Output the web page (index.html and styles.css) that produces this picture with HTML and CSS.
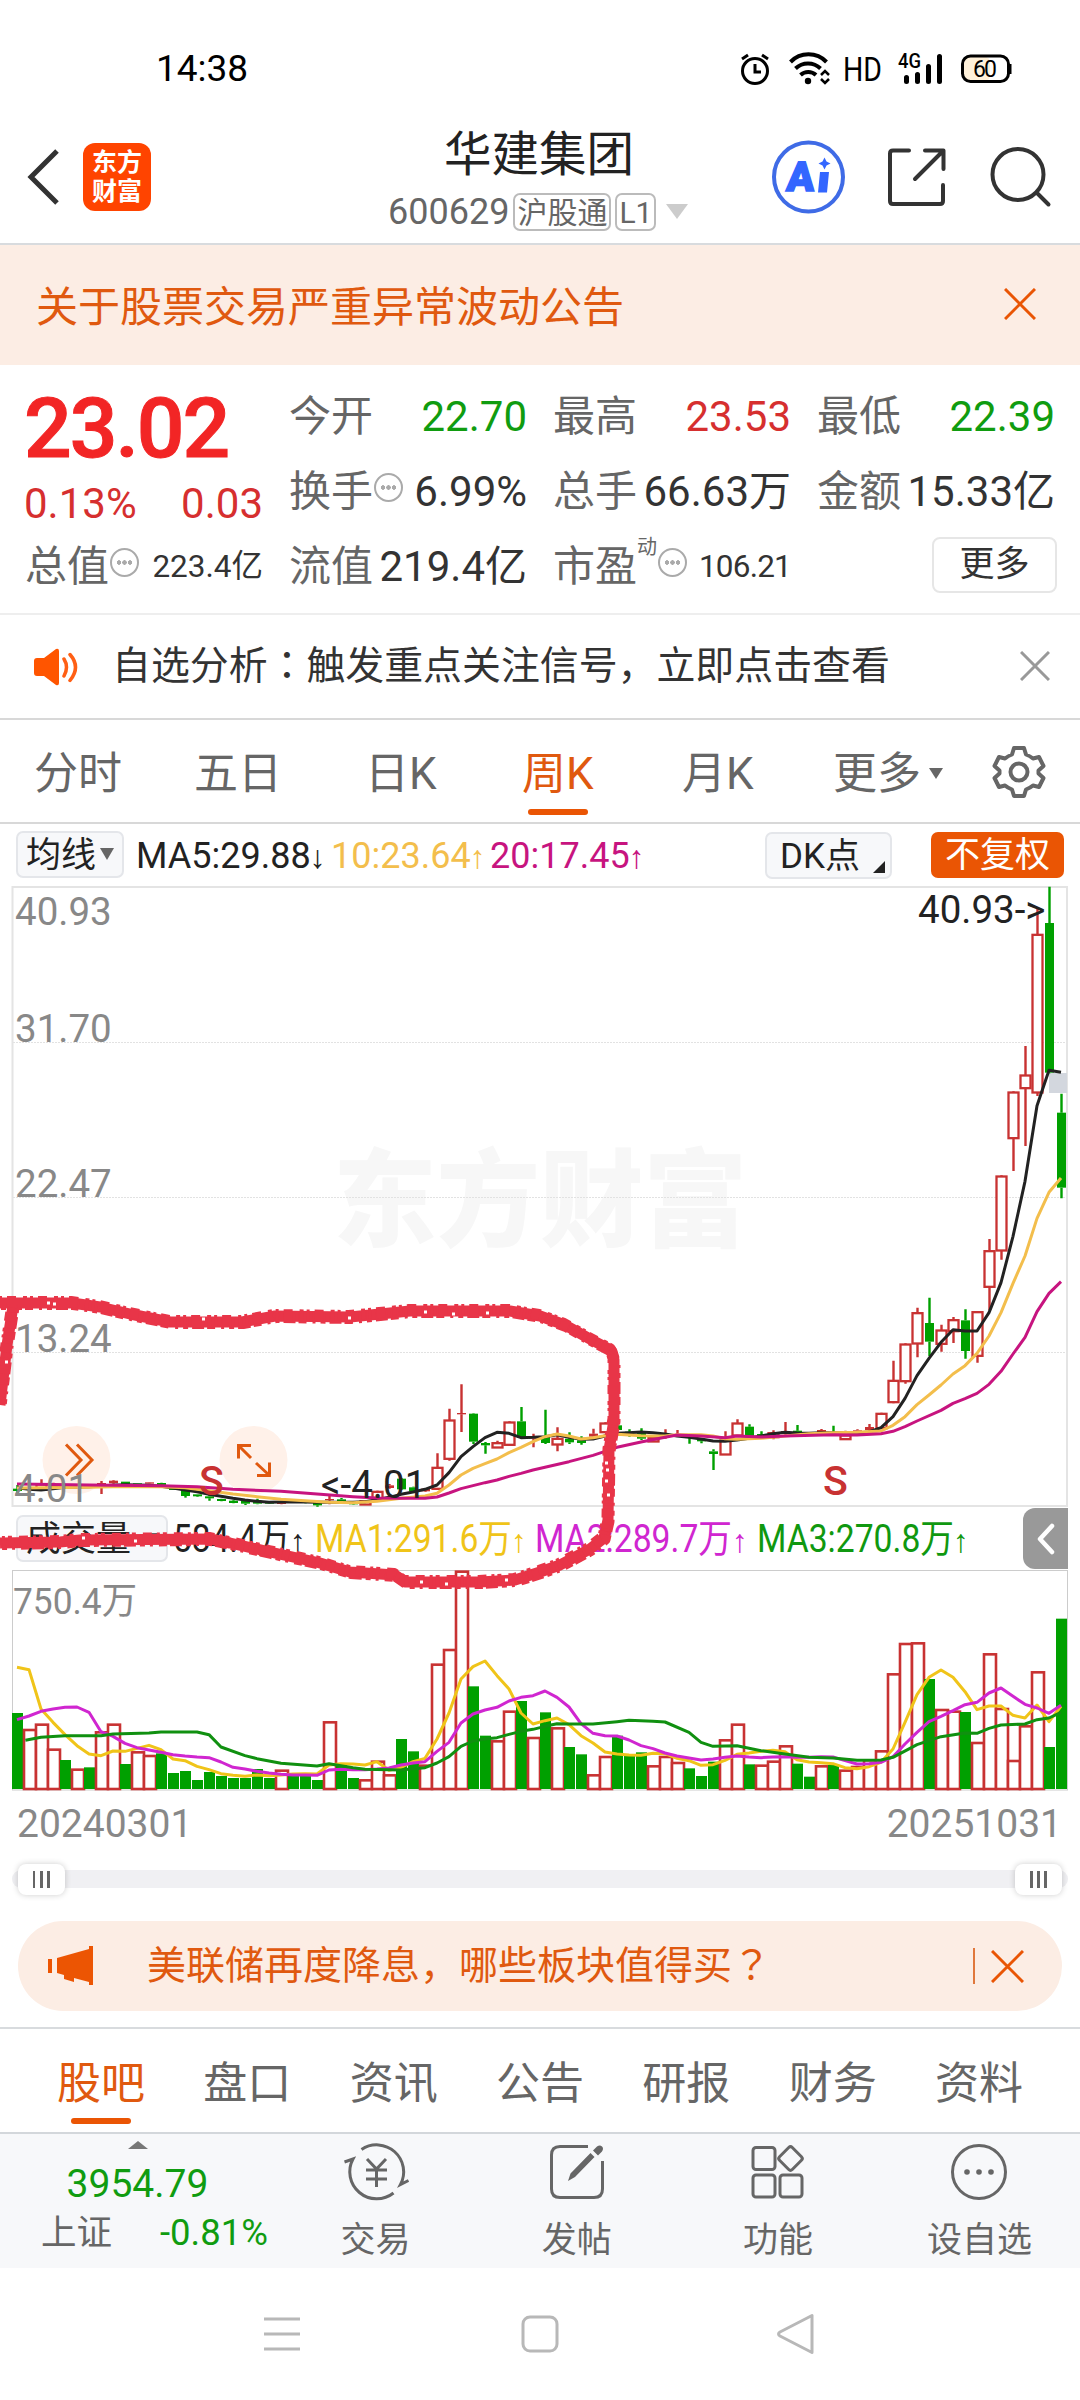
FILE: index.html
```html
<!DOCTYPE html>
<html lang="zh-CN">
<head>
  <meta charset="UTF-8">
  <title>华建集团 600629</title>
  <link rel="stylesheet" href="styles.css">
</head>
<body>
<div class="statusbar">
  <span class="time">14:38</span>
  <svg class="status-icons" width="280" height="40" viewBox="735 50 280 40">
    <g fill="none" stroke="#000" stroke-width="3">
      <circle cx="755" cy="71" r="12.5"/>
      <path d="M755 64v8h6M742 59l6-4M768 59l-6-4"/>
    </g>
    <g fill="none" stroke="#000" stroke-width="4">
      <path d="M790.500 62a25 25 0 0 1 36 0M795.500 68.500a18 18 0 0 1 25 0M800.500 75a11.500 11.500 0 0 1 15.500 0"/>
      <path stroke-width="2.500" d="M821 75l4-4 4 4M821 79l4 4 4-4"/>
    </g>
    <circle cx="808" cy="81" r="3.200"/>
    <text x="843" y="81" font-size="34" textLength="39" lengthAdjust="spacingAndGlyphs">HD</text>
    <text x="898" y="68" font-size="20" font-weight="500" textLength="23" lengthAdjust="spacingAndGlyphs">4G</text>
    <path stroke="#000" stroke-width="5" stroke-linecap="round" d="M906.500 77.500v4M917.500 74.500v7M928.500 66.500v15M939.500 56.500v25"/>
    <rect x="963" y="56.500" width="27" height="25" rx="6" fill="#fff1da"/>
    <rect x="962.500" y="56" width="46" height="25.500" rx="8" fill="none" stroke="#000" stroke-width="3"/>
    <path stroke="#000" stroke-width="3" d="M1010 64v10"/>
    <text x="973" y="77" font-size="23" textLength="24">60</text>
  </svg>
</div>

<header class="header">
  <svg class="back" width="34" height="58" viewBox="0 0 34 58"><path d="M31 3L5 29L31 55" fill="none" stroke="#333" stroke-width="5"/></svg>
  <div class="logo">东方<br>财富</div>
  <div class="title">
    <h1>华建集团</h1>
    <div class="code">600629<span class="tag">沪股通</span><span class="tag">L1</span><i class="tri"></i></div>
  </div>
  <svg class="head-icons" width="290" height="80" viewBox="765 137 290 80">
    <circle cx="808.500" cy="177" r="34.500" fill="none" stroke="#3f6be6" stroke-width="4"/>
    <text x="786" y="191" font-size="41" font-weight="900" fill="#3366ff" stroke="#3366ff" stroke-width="1.500" textLength="27" transform="skewX(-4) translate(13 0)">A</text>
    <path d="M820 172h9l-2 20.500h-9zM824.500 157.500l2 4 4 2-4 2-2 4-2-4-4-2 4-2z" fill="#3366ff"/>
    <g fill="none" stroke="#333" stroke-width="4" stroke-linecap="round" stroke-linejoin="round">
      <path d="M909 150.500H893q-3 0-3 3V201q0 3 3 3h47q3 0 3-3V185M925 150.500h18.500V169M943 151L915 179"/>
      <circle cx="1018" cy="174.500" r="25.500"/>
      <path d="M1037 193l11.500 11.500"/>
    </g>
  </svg>
</header>

<div class="notice">
  <span>关于股票交易严重异常波动公告</span>
  <svg width="32" height="32" viewBox="0 0 32 32"><path d="M1 1l30 30M31 1L1 31" stroke="#e95504" stroke-width="3"/></svg>
</div>

<section class="quote">
  <div class="price">
    <div class="now">23.02</div>
    <div class="change"><span>0.13%</span><span>0.03</span></div>
  </div>
  <div class="cell"><label>今开</label><b class="green">22.70</b></div>
  <div class="cell"><label>最高</label><b class="red">23.53</b></div>
  <div class="cell"><label>最低</label><b class="green">22.39</b></div>
  <div class="cell"><label>换手</label><i class="more-dot"></i><b>6.99%</b></div>
  <div class="cell"><label>总手</label><b>66.63万</b></div>
  <div class="cell"><label>金额</label><b>15.33亿</b></div>
  <div class="cell"><label>总值</label><i class="more-dot"></i><b class="small">223.4亿</b></div>
  <div class="cell"><label>流值</label><b>219.4亿</b></div>
  <div class="cell"><label>市盈</label><sup>动</sup><i class="more-dot"></i><b class="small tight">106.21</b></div>
  <div class="cell"><button class="btn-more">更多</button></div>
</section>

<div class="signal">
  <svg width="46" height="38" viewBox="33 647 46 38">
    <path d="M34 660q0-3 3-3h7l12-9q3-1 3 2v32q0 3-3 2l-12-9h-7q-3 0-3-3z" fill="#ff5500"/>
    <path d="M64 658q5 8 0 17M70 653.500q11 12.500 0 26" fill="none" stroke="#ff5f14" stroke-width="3.500" stroke-linecap="round"/>
  </svg>
  <span>自选分析<em lang="zh-TW">：</em>触发重点关注信号，立即点击查看</span>
  <svg width="30" height="30" viewBox="0 0 30 30"><path d="M1 1l28 28M29 1L1 29" stroke="#999" stroke-width="3"/></svg>
</div>

<nav class="periods">
  <a>分时</a><a>五日</a><a>日K</a><a class="active">周K</a><a>月K</a><a>更多<i></i></a>
  <svg width="54" height="54" viewBox="-27 -27 54 54" fill="none" stroke="#666" stroke-width="4" stroke-linejoin="round">
    <path d="M-5-24H5L7-17.500Q11-16 14-13.500L20-15L24.500-6L19.500-1.500V1.500L24.500 6L20 15L14 13.500Q11 16 7 17.500L5 24H-5L-7 17.500Q-11 16-14 13.500L-20 15L-24.500 6L-19.500 1.500V-1.500L-24.500-6L-20-15L-14-13.500Q-11-16-7-17.500Z"/>
    <circle r="8.500"/>
  </svg>
</nav>

<div class="chart">
  <div class="ma-row">
    <span class="pill">均线<i></i></span>
    <span class="ma5">MA5:29.88<em>↓</em></span>
    <span class="ma10">10:23.64<em>↑</em></span>
    <span class="ma20">20:17.45<em>↑</em></span>
    <span class="pill dk">DK点</span>
    <span class="fq">不复权</span>
  </div>

  <svg class="kline" width="1080" height="628" viewBox="0 882 1080 628">
    <text class="watermark" x="333" y="1238" textLength="414" lengthAdjust="spacingAndGlyphs">东方财富</text>
    <path d="M13 1042.500H1066M13 1197.500H1066M13 1352.500H1066" stroke="#e2e2e2" stroke-dasharray="2 1"/>
    <rect x="12.500" y="887" width="1054.500" height="619" fill="none" stroke="#e4e4e4" stroke-width="2"/>
    <circle class="float" cx="76.500" cy="1460" r="34"/>
    <circle class="float" cx="253.500" cy="1460" r="34"/>
    <g fill="none" stroke="#e0590f" stroke-width="3">
      <path d="M66 1452l15 15.500-15 15.500M77 1452l15 15.500-15 15.500" transform="translate(0 -7.500)"/>
      <path d="M251 1445.500h-12.500v13M239 1446l12 12M257 1475.500h12.500v-13M269 1475l-13-12"/>
    </g>
    <rect x="1049" y="1073" width="18" height="20" fill="#d3d7de"/>
    <g id="candles"></g>
    <g id="price-lines"></g>
    <g class="axis">
      <text x="15" y="925">40.93</text>
      <text x="15" y="1042">31.70</text>
      <text x="15" y="1197">22.47</text>
      <text x="15" y="1352">13.24</text>
      <text x="14" y="1502">4.01</text>
    </g>
    <text class="mark" x="321" y="1498">&lt;-4.01</text>
    <text class="mark" x="918" y="923">40.93-&gt;</text>
    <text class="sell" x="199" y="1495">S</text>
    <text class="sell" x="823" y="1495">S</text>
  </svg>

  <div class="vol-row">
    <span class="pill">成交量<i></i></span>
    <svg width="820" height="58" viewBox="170 1510 820 58">
      <g font-size="39">
        <text x="173" y="1552" textLength="117" lengthAdjust="spacingAndGlyphs" fill="#222">584.4万</text>
        <text x="315" y="1552" textLength="197" lengthAdjust="spacingAndGlyphs" fill="#f0c419">MA1:291.6万</text>
        <text x="535" y="1552" textLength="197" lengthAdjust="spacingAndGlyphs" fill="#d026d0">MA2:289.7万</text>
        <text x="757" y="1552" textLength="197" lengthAdjust="spacingAndGlyphs" fill="#109810">MA3:270.8万</text>
      </g>
      <g class="arrows">
        <text x="290" y="1552" fill="#222">↑</text>
        <text x="511" y="1552" fill="#f0c419">↑</text>
        <text x="732" y="1552" fill="#d026d0">↑</text>
        <text x="953" y="1552" fill="#109810">↑</text>
      </g>
    </svg>
    <span class="fold"><svg width="20" height="32" viewBox="0 0 20 32"><path d="M16 3L4 16l12 13" fill="none" stroke="#fff" stroke-width="4.500" stroke-linecap="round" stroke-linejoin="round"/></svg></span>
  </div>

  <svg class="volume" width="1080" height="224" viewBox="0 1568 1080 224">
    <rect x="12.500" y="1570.500" width="1055" height="219.500" fill="none" stroke="#ccc"/>
    <text class="axis" x="13" y="1614" textLength="124" lengthAdjust="spacingAndGlyphs">750.4万</text>
    <g id="bars"></g>
    <g id="vol-lines"></g>
  </svg>

  <div class="dates"><span>20240301</span><span>20251031</span></div>
  <div class="slider"><i></i><i></i></div>

  <!-- hand-drawn circle over the flat part of the chart -->
  <svg class="scribble" width="640" height="330" viewBox="0 1280 640 330">
    <g fill="none" stroke="#e83548">
      <path id="pen" stroke-linejoin="round" d="M0 1303H72L100 1307L130 1314L170 1322H242L275 1316L350 1317L410 1311H510L540 1316L565 1325L590 1339L611 1350L614 1360V1420L609 1450L608 1520L604 1538L590 1549L560 1565L540 1572L515 1580L480 1582H405L395 1575L350 1572L320 1563L270 1552L230 1543L210 1539L80 1540L60 1542L0 1543M13 1306L7 1345L0 1405"/>
      <use href="#pen" class="rough"/>
      <use href="#pen" class="rough two"/>
    </g>
    <path d="M47 1303h3M53 1304h3M202 1319h3M348 1318h3M424 1312h3M452 1314h3M486 1313h3M605 1463h3M606 1470h3M605 1481h3M607 1495h3M82 1538h3M134 1541h3M420 1582h3M445 1584h3M505 1580h3M5 1362h3" stroke="#fff" stroke-width="3"/>
  </svg>
</div>

<div class="banner">
  <svg width="46" height="42" viewBox="47 1945 46 42" fill="#ec5503">
    <path d="M48 1959h4v14h-4zM57 1958l32-9v-3h4v39h-4v-3l-15-4v4l-10-3v-4l-7-2z"/>
  </svg>
  <span>美联储再度降息，哪些板块值得买<em lang="zh-TW">？</em></span>
  <i></i>
  <svg width="33" height="33" viewBox="0 0 33 33"><path d="M1 1l31 31M32 1L1 32" stroke="#e95504" stroke-width="3"/></svg>
</div>

<nav class="sections">
  <a class="active">股吧</a><a>盘口</a><a>资讯</a><a>公告</a><a>研报</a><a>财务</a><a>资料</a>
</nav>

<footer class="toolbar">
  <div class="index">
    <i></i>
    <div class="value">3954.79</div>
    <div class="row"><span>上证</span><span class="green">-0.81%</span></div>
  </div>
  <div class="tool">
    <svg width="68" height="60" viewBox="341 2142 68 60" fill="none" stroke="#666" stroke-width="3">
      <path d="M360.500 2149.500A27 27 0 0 1 399.500 2184.500l8-4M392.500 2193A27 27 0 0 1 352 2159l-8.500 3"/>
      <path d="M366 2159l9.500 10 9.500-10M365 2170h21M365 2179h21M375.500 2169v18"/>
    </svg>
    交易
  </div>
  <div class="tool">
    <svg width="60" height="60" viewBox="547 2142 60 60" fill="none" stroke="#666" stroke-width="3">
      <path d="M588 2146.500H560q-8.500 0-8.500 8.500V2189q0 8.500 8.500 8.500H594q8.500 0 8.500-8.500V2161"/>
      <path d="M568 2181l2.500-7.500L590.500 2153l4 4L575 2177zM593 2150.500l4-4q3-2 5 0t0 5l-4 4z" fill="#666" stroke="none"/>
    </svg>
    发帖
  </div>
  <div class="tool">
    <svg width="60" height="60" viewBox="749 2142 60 60" fill="none" stroke="#666" stroke-width="3">
      <rect x="754" y="2147.500" width="22" height="22" rx="3"/><rect x="754" y="2175" width="22" height="22" rx="3"/>
      <rect x="781" y="2175" width="22" height="22" rx="3"/><rect x="782.500" y="2149.500" width="18" height="18" rx="2.500" transform="rotate(45 791.500 2158.500)"/>
    </svg>
    功能
  </div>
  <div class="tool">
    <svg width="60" height="60" viewBox="-30 -30 60 60"><circle r="26.500" fill="none" stroke="#666" stroke-width="3"/><g fill="#666"><circle cx="-12" r="2.800"/><circle r="2.800"/><circle cx="12" r="2.800"/></g></svg>
    设自选
  </div>
</footer>

<div class="sysnav">
  <svg width="40" height="42" viewBox="0 0 40 42"><path d="M0 6h36M0 21h36M0 36h36" stroke="#b8b8b8" stroke-width="3"/></svg>
  <svg width="38" height="42" viewBox="0 0 38 42"><rect x="2" y="4" width="34" height="34" rx="7" fill="none" stroke="#b8b8b8" stroke-width="3"/></svg>
  <svg width="40" height="44" viewBox="0 0 40 44"><path d="M36 3.500V40.500L4 24q-3-2 0-4z" fill="none" stroke="#b8b8b8" stroke-width="3" stroke-linejoin="round"/></svg>
</div>
<script src="chart.js"></script>
</body>
</html>
```
FILE: styles.css
```css
body { margin: 0; width: 1080px; height: 2400px; background: #fff; color: #333; font-family: Roboto, "Noto Sans CJK SC", sans-serif; overflow: hidden; }
* { box-sizing: border-box; }
svg { display: block; flex: none; }
svg text { font-family: Roboto, "Noto Sans CJK SC", sans-serif; }
i, em { font-style: normal; }
b { font-weight: 400; }
[lang="zh-TW"] { font-family: "Noto Sans CJK TC", sans-serif; line-height: 1; }
.green { color: #109c10; }
.red { color: #d62f2f; }

.statusbar { height: 122px; display: flex; justify-content: space-between; padding: 50px 65px 0 156px; color: #000; }
.time { font-size: 37px; line-height: 38px; }

.header { height: 123px; display: flex; align-items: center; border-bottom: 2px solid #d8dbde; padding: 0 25px 0 26px; position: relative; }
.back { margin-top: -12px; }
.logo { width: 68px; height: 68px; margin: -12px 0 0 23px; background: #ff4400; border-radius: 12px; color: #fff; font-size: 25px; font-weight: 700; line-height: 29px; text-align: center; padding-top: 5px; }
.title { margin-left: 238px; width: 302px; }
h1 { margin: -9px 0 0 55px; font-size: 47.500px; font-weight: 400; line-height: 60px; color: #222; white-space: nowrap; }
.code { display: flex; align-items: center; font-size: 36px; line-height: 40px; color: #666; margin-top: 7px; white-space: nowrap; margin-left: -1px; }
.tag { font-size: 30px; line-height: 35px; height: 38px; border: 2px solid #bbb; border-radius: 7px; padding: 0 2px; margin-left: 4px; }
.tri { margin-left: 10px; border: 11px solid transparent; border-top: 15px solid #ccc; border-bottom: 0; }
.head-icons { margin: -12px 0 0 auto; }

.notice { height: 120px; background: #fcede4; color: #e0590f; display: flex; align-items: center; justify-content: space-between; padding: 0 44px 2px 36px; font-size: 42px; }
.notice span { margin-top: -2px; }

.quote { height: 250px; border-bottom: 2px solid #eee; padding: 14px 25px 0 25px; display: grid; grid-template-columns: 238px 238px 238px 238px; grid-template-rows: 75px 75px 75px; column-gap: 26px; }
.price { grid-row: span 2; color: #f22525; }
.now { font-size: 84px; font-weight: 500; line-height: 99px; letter-spacing: -2px; -webkit-text-stroke: 1px #f22525; margin-left: -1px; }
.change { display: flex; justify-content: space-between; font-size: 42px; line-height: 52px; color: #d62f2f; margin-left: -1px; }
.cell { display: flex; align-items: center; font-size: 42px; line-height: 75px; white-space: nowrap; }
.cell label { color: #666; }
.cell b { margin-left: auto; }
.cell b.green { color: #109c10; }
.cell .small { font-size: 31.500px; }
.cell .tight { letter-spacing: -0.8px; }
.cell sup { font-size: 20px; line-height: 20px; color: #666; margin: -40px 0 0 0; }
.more-dot { width: 29px; height: 29px; border: 2px solid #aaa; border-radius: 50%; margin: -8px 0 0 1px; background: radial-gradient(circle at 7px 12.500px, #aaa 2px, transparent 2.500px), radial-gradient(circle at 12.500px 12.500px, #aaa 2px, transparent 2.500px), radial-gradient(circle at 18px 12.500px, #aaa 2px, transparent 2.500px); }
.btn-more { margin: -4px -2px 0 auto; width: 125px; height: 56px; background: #fff; border: 2px solid #e6e6e6; border-radius: 8px; font: 35px/51px Roboto, "Noto Sans CJK SC", sans-serif; color: #333; padding: 0; }

.signal { height: 105px; border-bottom: 2px solid #d8d8d8; display: flex; align-items: center; padding: 0 30px 0 33px; font-size: 38.900px; }
.signal span { margin: 0 auto 0 33px; white-space: nowrap; line-height: 46px; padding-bottom: 1px; }
.signal svg:last-child { margin-top: -2px; }

.periods { height: 104px; border-bottom: 2px solid #d8d8d8; display: grid; grid-template-columns: 160px 171px 157px 160px 151px 159px 54px; align-items: center; padding: 0 34px; font-size: 44px; color: #666; }
.periods a { position: relative; line-height: 97px; padding-top: 6px; justify-self: start; white-space: nowrap; }
.periods a i { display: inline-block; vertical-align: 10px; margin-left: 8px; border: 7px solid transparent; border-top: 11px solid #666; border-bottom: 0; }
.active { color: #e0590f; }
.periods .active::after, .sections .active::after { content: ""; position: absolute; left: 50%; margin-left: -30px; bottom: 8px; width: 60px; height: 6px; border-radius: 3px; background: #ea5504; }

.chart { position: relative; height: 1097px; }
.ma-row { height: 58px; padding: 7px 16px 0; display: flex; align-items: flex-start; font-size: 36px; line-height: 50px; white-space: nowrap; }
.ma-row em, .arrows text { font-family: "Liberation Sans", sans-serif; }
.ma-row em { font-size: 32px; display: inline-block; width: 13px; margin-left: -1px; }
.arrows { font-size: 32px; }
.pill { height: 47px; border: 2px solid #e4e6ea; border-radius: 7px; background: #f7f8fa; font-size: 35px; line-height: 45px; color: #222; padding: 0 8px; white-space: nowrap; }
.pill i { display: inline-block; vertical-align: 7px; margin-left: 4px; border: 7px solid transparent; border-top: 12px solid #666; border-bottom: 0; }
.ma5 { color: #222; margin-left: 12px; width: 195px; }
.ma10 { color: #f3be4c; width: 159px; }
.ma20 { color: #c7147f; }
.dk { margin: 1px 0 0 auto; width: 127px; padding-left: 13px; position: relative; }
.dk::after { content: ""; position: absolute; right: 5px; bottom: 4px; border-left: 12px solid transparent; border-bottom: 12px solid #222; }
.fq { margin: 1px 0 0 39px; width: 133px; height: 46px; border-radius: 7px; background: #ea5504; color: #fff; font-size: 35px; line-height: 48px; text-align: center; }

.axis { font-size: 38.5px; fill: #888; }
text.axis { font-size: 37px; }
.watermark { font-size: 106px; font-weight: 900; fill: #f7f7f7; }
.float { fill: #fff1e9; }
.mark { font-size: 38.5px; fill: #222; }
.sell { font-size: 41px; font-weight: 500; fill: #c83232; }

.vol-row { height: 58px; display: flex; padding-left: 16px; }
.vol-row .pill { width: 152px; margin-top: 5px; flex: none; }
.vol-row .pill i { margin-left: 14px; vertical-align: 6px; }
.vol-row > svg { margin-left: 2px; }
.fold { margin: -2px 0 0 33px; width: 45px; height: 61px; background: #999; border-radius: 12px 0 0 12px; display: flex; align-items: center; justify-content: center; }

.dates { display: flex; justify-content: space-between; padding: 1px 18px 0 17px; font-size: 39px; line-height: 62px; color: #888; }
.slider { margin: 15px 12px 0; height: 18px; border-radius: 9px; background: #f0f0f3; display: flex; align-items: center; justify-content: space-between; padding: 0 6px; }
.slider i { width: 47px; height: 31px; border-radius: 8px; background: #fff; box-shadow: 0 0 6px #0003; display: flex; align-items: center; justify-content: center; }
.slider i::before { content: ""; width: 17px; height: 17px; background: repeating-linear-gradient(90deg, #666 0 2.500px, transparent 2.500px 7.200px); }
.scribble { position: absolute; left: 0; top: 456px; }
.scribble g { stroke-width: 11px; }
.scribble .rough { stroke-dasharray: 5 4 12 3 8 6 3 5; transform: translate(1px, 1.5px); }
.scribble .rough.two { stroke-dasharray: 3 5 9 7 4 3; transform: translate(-1px, -1.5px); }

.banner { margin: 0 18px; height: 90px; border-radius: 45px; background: #fcede4; color: #e0590f; display: flex; align-items: center; padding: 0 38px 0 29px; font-size: 39px; }
.banner span { margin: 0 auto 0 54px; line-height: 46px; padding-bottom: 1px; white-space: nowrap; }
.banner i { width: 2px; height: 36px; background: #e0783c; margin-right: 16px; }

.sections { margin-top: 16px; height: 107px; border-top: 2px solid #d8dbde; border-bottom: 2px solid #d3d7db; display: flex; justify-content: space-between; padding: 0 57px; font-size: 44px; line-height: 98px; color: #666; }
.sections a { position: relative; padding-top: 6px; }
.sections .active::after { bottom: 8px; }

.toolbar { height: 134px; background: #f7f8fa; display: flex; color: #666; }
.index { width: 275px; text-align: center; padding-top: 7px; margin-right: 0; }
.index i { display: block; width: 20px; margin: 0 0 0 128px; border: 10px solid transparent; border-bottom: 8px solid #777; border-top: 0; }
.value { font-size: 39px; line-height: 46px; color: #109c10; margin-top: 12px; }
.row { display: flex; justify-content: space-between; padding: 0 7px 0 41px; font-size: 35.500px; line-height: 52px; }
.row .green { font-size: 36.500px; }
.tool { width: 201.300px; text-align: center; font-size: 35px; line-height: 54px; padding-top: 8px; }
.tool svg { margin: 0 auto 12px; }

.sysnav { display: flex; justify-content: space-between; align-items: center; padding: 0 264px; height: 131px; }
```
FILE: chart.js
```js
const RED = '#c83232', GREEN = '#00a000';
const STEP = 12, X0 = 17;

// color, open/close range, high, low (3 units = 1px, measured from y 1260)
const candles = `g 686 693 675 700|r 683 690 683 697|r 672 688 658 690|r 676 684 668 686|r 678 682 674 684|r 676 680 674 682|r 675 679 672 682|r 669 673 663 702
r 662 670 660 672|g 665 672 665 673|g 670 675 670 675|r 667 671 666 672|g 669 682 668 684|g 684 690 684 690|g 690 708 690 713|g 703 709 703 711|g 709 715 703 722|g 717 723 716 724
g 722 729 720 730|g 722 731 722 735|g 722 731 716 733|g 725 731 724 732|r 723 732 722 733|r 724 728 724 728|g 725 729 725 730|g 729 736 728 740|r 717 721 707 733|g 718 723 714 726
g 729 733 728 734|r 722 732 721 733|r 694 714 692 714|r 676 684 672 686|g 656 688 654 690|g 682 694 680 694|r 686 694 684 696|r 622 685 580 690|r 480 595 446 602|r 459 463 373 516
g 461 545 460 552|g 549 556 546 581|r 548 561 542 563|r 486 553 484 556|g 484 533 441 536|r 530 536 521 562|g 530 549 449 552|r 535 552 502 574|g 536 547 517 552|g 541 549 529 554
r 521 530 506 532|r 489 515 487 518|g 496 510 494 512|g 515 528 508 530|g 518 536 505 540|r 533 543 530 544|r 524 532 508 536|r 522 528 510 530|g 527 533 526 551|g 538 544 536 550
g 574 582 568 630|r 540 582 514 584|r 489 525 478 528|g 500 528 493 530|g 522 530 514 532|r 518 530 511 538|r 513 518 486 524|g 512 520 495 522|g 517 522 516 523|r 510 516 507 518
g 517 524 497 526|r 525 536 512 539|r 511 518 508 520|r 501 510 492 512|r 460 503 458 506|r 361 425 302 430|r 252 362 250 371|r 158 249 143 292|g 189 245 113 288|r 210 250 194 275
r 179 212 171 249|g 181 273 148 296|r 155 286 153 308|r -28 79 -63 150|r -252 -30 -254 -1|r -504 -367 -506 -267|r -555 -517 -642 -342|r -977 -504 -1055 -492|g -1011 -562 -1120 -560|g -442 -217 -499 -185`
  .split(/[|\n]/).map(s => s.split(' '));

const volumes = ('g228 r180 r196 r121 g87 r61 g65 r173 r196 g75 r113 r102 g107 g48 g54 g27 g51 g39 g33 g33 g60 g33 r58 g39 g39 g27 r203 g72 g33 r29 r85 r44 ' +
  'g150 g113 r73 r376 r420 r655 g308 g160 r146 r235 g264 r156 g230 r185 g126 g104 r44 r99 g160 g99 g110 r71 r99 r81 g62 g39 g82 r149 r196 g74 r73 r85 r131 ' +
  'g76 g37 r71 g72 r58 r69 r89 r116 r347 r438 r440 g330 r240 r235 g231 r141 r407 r243 r87 r191 r353 g126 g511').split(' ');

// "index:value" pairs, missing indexes are joined straight
const priceLines = [
  ['#222', '0:683 1:688 2:690 3:686 4:682 6:680 8:676 9:674 11:676 12:679 13:684 14:690 15:695 16:703 17:709 18:715 19:720 20:724 21:727 23:725 25:727 28:727 29:725 30:719 31:712 32:703 33:696 34:688 35:675 36:638 37:590 38:560 39:533 40:517 41:520 42:533 43:532 44:530 45:524 46:532 47:538 48:537 49:528 50:520 51:518 52:516 53:518 54:522 55:528 56:532 57:537 58:543 59:544 60:540 61:535 62:528 63:521 64:517 65:519 66:520 67:518 70:519 71:516 72:503 73:470 74:415 75:347 76:295 77:247 78:209 79:213 80:213 81:158 82:68 83:-71 84:-236 85:-463 86:-569 87:-563'],
  ['#f3be4c', '0:684 6:682 8:680 12:680 14:683 16:692 18:702 20:710 22:718 24:722 26:727 28:728 30:724 32:715 34:708 35:700 36:675 37:645 38:625 39:611 40:597 41:578 42:562 43:545 44:530 45:522 46:528 47:537 48:533 49:527 50:523 52:527 54:528 55:524 57:524 58:528 59:536 60:538 62:535 64:528 66:521 68:518 70:517 72:513 73:496 74:470 75:434 76:405 77:375 78:342 79:317 80:280 81:228 82:158 83:70 84:-12 85:-125 86:-203 87:-246'],
  ['#c7147f', '0:672 6:675 12:677 15:680 18:688 22:694 25:702 28:710 30:714 32:715 34:715 35:711 36:699 37:686 39:668 40:660 41:649 42:640 43:630 44:622 46:605 48:586 50:562 52:546 54:532 55:525 57:528 59:533 60:528 62:531 64:528 68:524 70:525 72:521 73:514 74:500 75:483 77:451 78:430 79:416 80:400 81:373 82:334 83:282 84:232 85:155 86:100 87:65']
];
const volLines = [
  ['#f0c419', '0:365 1:358 2:240 3:200 4:163 5:130 6:105 7:100 8:114 9:113 10:122 11:131 12:118 13:90 14:85 15:68 16:58 17:46 18:41 19:38 20:42 21:40 22:42 23:45 24:46 25:45 26:72 27:76 28:75 29:72 30:82 31:56 32:65 33:82 34:92 35:150 36:228 37:330 38:367 39:384 40:340 41:300 42:228 43:195 44:205 45:213 46:193 47:160 48:138 49:111 50:105 51:102 52:101 53:107 54:106 55:92 56:85 57:71 58:73 59:86 60:104 61:108 62:113 63:116 64:112 65:88 66:81 67:79 68:76 69:64 70:61 71:67 72:80 73:120 74:200 75:283 76:335 77:357 78:335 79:292 80:238 81:249 82:249 83:221 84:213 85:252 86:202 87:248'],
  ['#d026d0', '0:208 1:219 2:233 3:240 4:245 5:246 6:230 7:172 8:158 9:137 10:124 11:117 12:110 13:103 14:99 15:96 16:94 17:81 18:65 19:60 20:53 21:48 22:44 23:42 24:42 25:41 26:57 27:59 28:58 29:58 30:60 31:63 32:72 33:78 34:82 35:113 36:140 37:198 38:225 39:237 40:245 41:264 42:275 43:280 44:294 45:275 46:246 47:196 48:167 49:160 50:159 51:147 52:130 53:121 54:108 55:99 56:93 57:87 58:90 59:95 60:99 61:96 62:94 63:96 64:97 65:95 66:95 67:97 68:96 69:85 70:75 71:76 72:80 73:97 74:135 75:170 76:202 77:218 78:235 79:253 80:260 81:288 82:303 83:278 84:254 85:243 86:227 87:251'],
  ['#109010', '0.7:146 2:155 4:160 7:160 8:165 11:168 12:171 15:171 16:163 17:126 19:100 20:91 22:77 25:69 26:76 28:64 29:59 32:57 33:61 34:64 35:78 36:97 37:128 38:144 39:150 40:154 41:164 42:173 43:179 44:188 45:196 46:195 48:195 50:202 51:206 53:203 54:201 56:170 57:140 58:128 59:129 60:130 62:115 64:105 66:95 68:93 70:86 72:87 73:95 75:133 77:157 79:168 80:167 81:182 82:192 84:195 85:208 86:213 87:230']
];

const cx = i => X0 + i * STEP;
const priceY = v => 1260 + v / 3;
const volY = v => 1789 - v / 3;

document.getElementById('candles').innerHTML = candles.map(([c, a, b, hi, lo], i) => {
  const x = cx(i), color = c === 'r' ? RED : GREEN;
  const top = priceY(+a), h = (b - a) / 3;
  const wick = `<path d="M${x + 0.5} ${priceY(+hi)}V${top}M${x + 0.5} ${top + h}V${priceY(+lo)}" stroke="${color}" stroke-width="2.4"/>`;
  if (c === 'r' && h > 3) {
    return wick + `<rect x="${x - 4.5}" y="${top + 0.5}" width="10" height="${h}" fill="#fff" stroke="${color}" stroke-width="2.3"/>`;
  }
  return wick + `<rect x="${x - 4}" y="${top}" width="9" height="${h}" fill="${color}"/>`;
}).join('');

document.getElementById('bars').innerHTML = volumes.map((s, i) => {
  const h = s.slice(1) / 3, y = 1789 - h;
  return s[0] === 'r'
    ? `<rect x="${cx(i) - 5}" y="${y + 1}" width="12" height="${h - 1}" fill="#fff" stroke="${RED}" stroke-width="2.6"/>`
    : `<rect x="${cx(i) - 5}" y="${y}" width="11" height="${h}" fill="${GREEN}"/>`;
}).join('');

function drawLines(id, lines, toY) {
  document.getElementById(id).innerHTML = lines.map(([color, data]) => {
    const pts = data.split(' ').map(p => p.split(':')).map(([i, v]) => cx(+i) + ',' + toY(+v)).join(' ');
    return `<polyline points="${pts}" fill="none" stroke="${color}" stroke-width="3" stroke-linejoin="round"/>`;
  }).join('');
}
drawLines('price-lines', priceLines, priceY);
drawLines('vol-lines', volLines, volY);
```
